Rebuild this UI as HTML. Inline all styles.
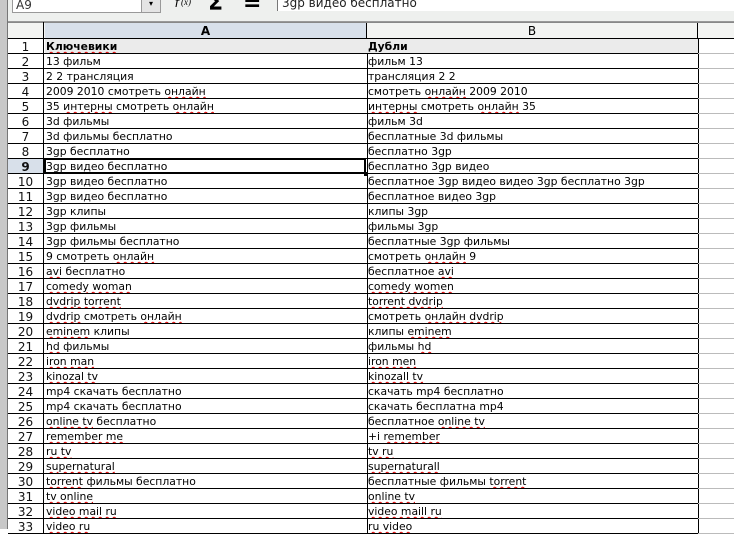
<!DOCTYPE html>
<html><head><meta charset="utf-8"><style>
body{margin:0;width:734px;height:529px;overflow:hidden;background:#fff;font-family:"DejaVu Sans","Liberation Sans",sans-serif;font-size:10.8px;position:relative}
.a{position:absolute}
.r{position:absolute;left:8px;width:726px;height:15px}
.n{position:absolute;left:0;width:36px;height:14px;text-align:center;line-height:16px;font-size:12px;color:#111;border-right:1px solid #000;box-sizing:border-box}
.c1{position:absolute;left:37px;width:321px;line-height:15px;white-space:nowrap;overflow:hidden;padding-left:1px;border-right:1px solid #000;height:14px}
.c2{position:absolute;left:359px;width:330px;line-height:15px;white-space:nowrap;overflow:hidden;padding-left:1px;border-right:1px solid #000;height:14px}
.c3{position:absolute;left:690px;width:36px;height:15px;border-bottom:1px solid #bbb;top:0;box-sizing:border-box}
.r .ln{position:absolute;left:0;width:690px;bottom:0;height:1px;background:#000}
u{text-decoration:underline wavy #d00;text-decoration-thickness:1px;text-underline-offset:1px}
</style></head><body>
<div class="a" style="left:0;top:0;width:7px;height:529px;background:#c8c8c8;border-right:1px solid #777"></div>
<div class="a" style="left:8px;top:0;width:726px;height:21px;background:#eef0ee;border-bottom:1px solid #999"></div>
<div class="a" style="left:12px;top:-2px;width:126px;height:13px;background:#fff;border:1px solid #999;font-size:12px;line-height:12px;padding-left:3px;color:#333">A9</div>
<div class="a" style="left:141px;top:-2px;width:18px;height:13px;background:#e4e4e4;border:1px solid #999;font-size:8px;text-align:center;line-height:10px">▾</div>
<div class="a" style="left:174px;top:-6px;font-size:14px;font-style:italic;font-family:'Liberation Serif',serif">ƒ<span style="font-size:9px">(x)</span></div>
<div class="a" style="left:208px;top:-9px;font-size:22px;font-weight:bold">Σ</div>
<div class="a" style="left:243px;top:-9px;font-size:22px;font-weight:bold">=</div>
<div class="a" style="left:277px;top:-2px;width:460px;height:13px;background:#fff;border-left:1px solid #777;font-size:12px;line-height:10px;padding-left:4px;color:#222">3gp видео бесплатно</div>
<div class="a" style="left:8px;top:22px;width:726px;height:17px;background:#f3f4f2;border-top:1px solid #888;border-bottom:1px solid #000;box-sizing:border-box"></div>
<div class="a" style="left:8px;top:22px;width:36px;height:17px;border-right:1px solid #000;box-sizing:border-box"></div>
<div class="a" style="left:45px;top:23px;width:321px;height:15px;background:#d8e0ea;text-align:center;font-weight:bold;font-size:12px;line-height:16px;border-right:1px solid #000">A</div>
<div class="a" style="left:367px;top:23px;width:330px;height:15px;text-align:center;font-size:12px;line-height:16px;border-right:1px solid #000">B</div>
<div id="g"></div>
<script>
var d=[["<b><u>Ключевики</u></b>","<b>Дубли</b>"],["13 фильм","фильм 13"],["2 2 трансляция","трансляция 2 2"],["2009 2010 смотреть <u>онлайн</u>","смотреть <u>онлайн</u> 2009 2010"],["35 <u>интерны</u> смотреть <u>онлайн</u>","<u>интерны</u> смотреть <u>онлайн</u> 35"],["3d фильмы","фильм 3d"],["3d фильмы бесплатно","бесплатные 3d фильмы"],["3gp бесплатно","бесплатно 3gp"],["3gp видео бесплатно","бесплатно 3gp видео"],["3gp видео бесплатно","бесплатное 3gp видео видео 3gp бесплатно 3gp"],["3gp видео бесплатно","бесплатное видео 3gp"],["3gp клипы","клипы 3gp"],["3gp фильмы","фильмы 3gp"],["3gp фильмы бесплатно","бесплатные 3gp фильмы"],["9 смотреть <u>онлайн</u>","смотреть <u>онлайн</u> 9"],["<u>avi</u> бесплатно","бесплатное <u>avi</u>"],["<u>comedy woman</u>","<u>comedy women</u>"],["<u>dvdrip torrent</u>","<u>torrent dvdrip</u>"],["<u>dvdrip</u> смотреть <u>онлайн</u>","смотреть <u>онлайн dvdrip</u>"],["<u>eminem</u> клипы","клипы <u>eminem</u>"],["<u>hd</u> фильмы","фильмы <u>hd</u>"],["<u>iron man</u>","<u>iron men</u>"],["<u>kinozal tv</u>","<u>kinozall tv</u>"],["mp4 скачать бесплатно","скачать mp4 бесплатно"],["mp4 скачать бесплатно","скачать бесплатна mp4"],["<u>online tv</u> бесплатно","бесплатное <u>online tv</u>"],["<u>remember me</u>","+i <u>remember</u>"],["<u>ru tv</u>","<u>tv ru</u>"],["<u>supernatural</u>","<u>supernaturall</u>"],["<u>torrent</u> фильмы бесплатно","бесплатные фильмы <u>torrent</u>"],["<u>tv online</u>","<u>online tv</u>"],["<u>video mail ru</u>","<u>video maill ru</u>"],["<u>video ru</u>","<u>ru video</u>"]];
var h="";
for(var i=0;i<d.length;i++){var t=39+15*i;var bg=i==0?"background:#ebebeb;":"";
var nb=i==8?"background:#d8e0ea;font-weight:bold;":"";
h+='<div class="r" style="top:'+t+'px"><div class="n" style="'+nb+'">'+(i+1)+'</div><div class="c1" style="'+bg+'">'+d[i][0]+'</div><div class="c2" style="'+bg+'">'+d[i][1]+'</div><div class="c3"></div><div class="ln"></div></div>';}
h+='<div class="a" style="left:44px;top:158px;width:322px;height:16px;border:2px solid #000;box-sizing:border-box"></div><div class="a" style="left:364px;top:172px;width:4px;height:4px;background:#000"></div>';
document.getElementById("g").innerHTML=h;
</script>
</body></html>
